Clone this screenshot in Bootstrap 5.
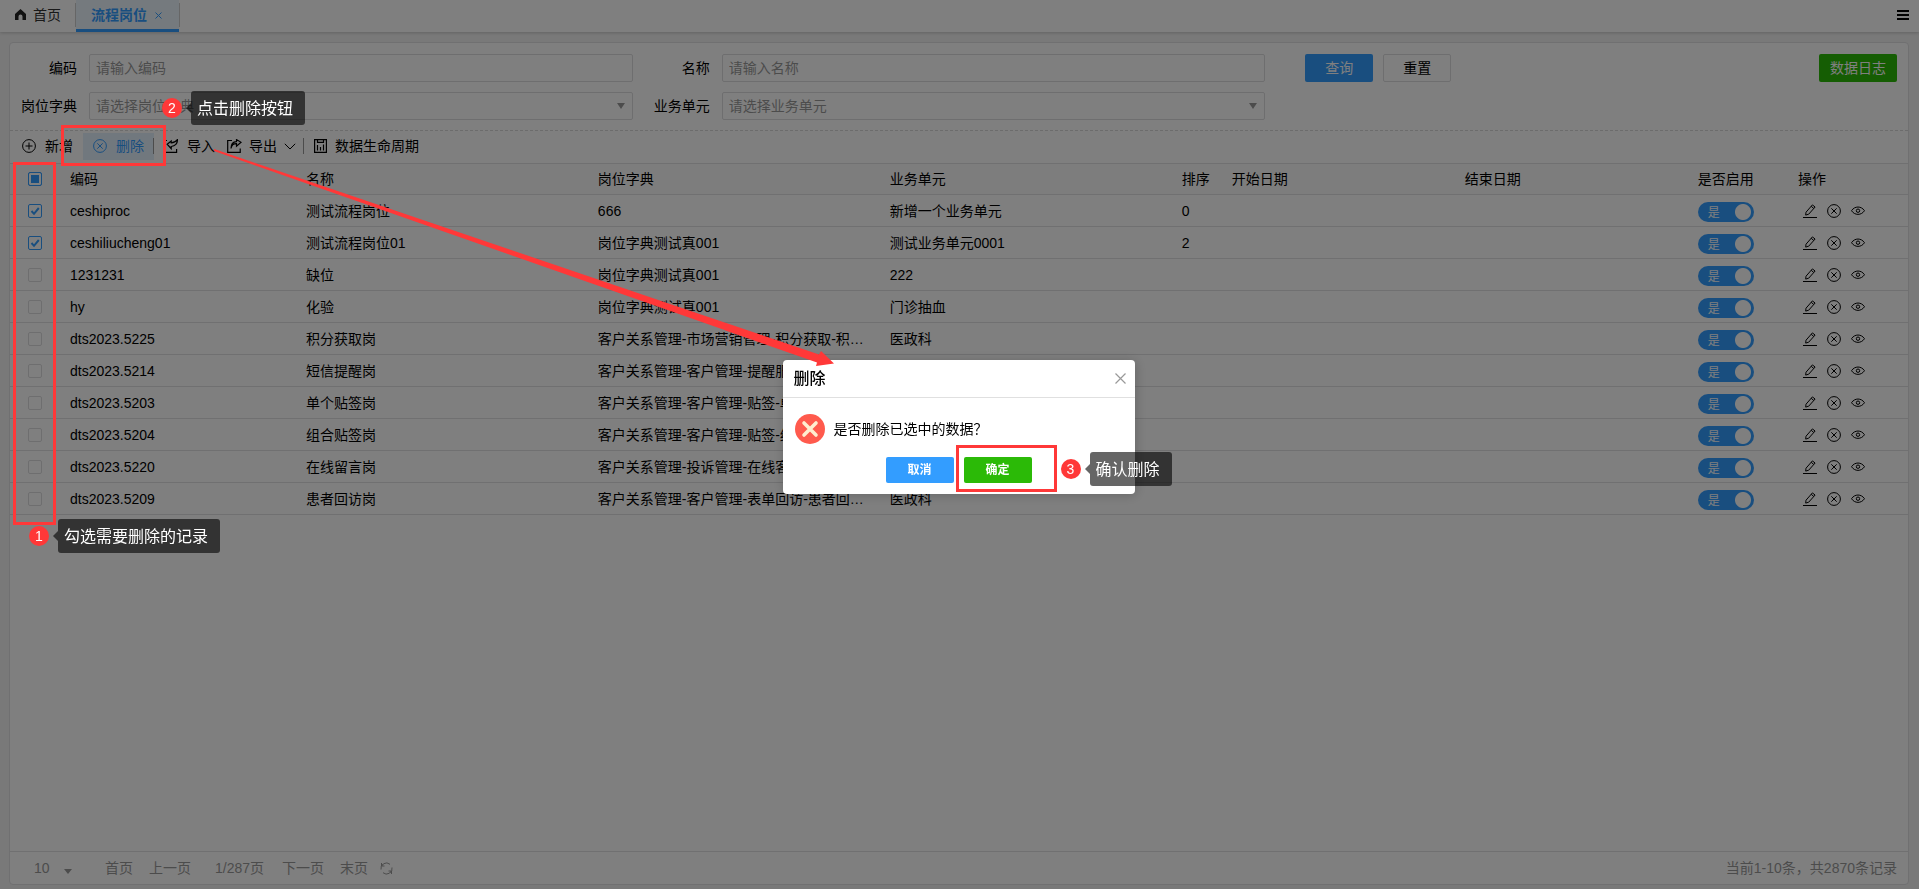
<!DOCTYPE html>
<html lang="zh-CN">
<head>
<meta charset="utf-8">
<meta name="viewport" content="width=device-width, initial-scale=1">
<title>流程岗位</title>
<link rel="stylesheet" href="https://cdn.jsdelivr.net/npm/bootstrap@5.3.0/dist/css/bootstrap.min.css">
<style>
:root { --blue: #339dff; --line: #e0e0e2; --red: #ff3838; --green: #2bba07; }
body { font: 14px/20px "Liberation Sans", "Noto Sans CJK SC", sans-serif; color: #000; background: #f2f2f2; }
button, input, select { font: inherit; color: inherit; }
svg { display: block; flex: none; }
.plain { border: 0; background: none; padding: 0; }
a { color: inherit; text-decoration: none; }

/* tab strip */
.tabstrip { height: 32px; background: #fff; box-shadow: 0 1px 3px rgba(0,0,0,.18); }
.tab-home { padding: 0 14px 3px 15px; color: #333; gap: 7px; }
.tab-now { width: 103px; padding: 1px 17px 0 15px; background: #eaf4fd; color: var(--blue); border-bottom: 3px solid var(--blue); font-weight: 700; }
.tab-rule { width: 1px; height: 24px; background: #ccc; margin-top: 3px; }
.tab-menu { padding: 0 10px 2px 10px; }

/* main panel */
.panel { margin: 10px 10px 4px 9px; background: #fff; border: 1px solid var(--line); border-radius: 4px; }
.filters { padding-top: 11px; border-bottom: 1px dashed #d8d8d8; }
.field { display: flex; align-items: center; margin-bottom: 10px; padding-right: 10px; }
.field label { width: 79px; padding-right: 12px; text-align: right; flex: none; }
.box { flex: 1; min-width: 0; height: 28px; padding: 0 6px; border: 1px solid #dcdcde; border-radius: 2px; background: #fff; color: #999; }
.box::placeholder { color: #999; opacity: 1; }
select.box, .page-size { appearance: none; background: #fff url("data:image/svg+xml,%3Csvg xmlns='http://www.w3.org/2000/svg' width='8' height='6'%3E%3Cpath d='M0 0h8L4 6z' fill='%23999'/%3E%3C/svg%3E") no-repeat right 7px center; }
.filter-actions { padding: 0 11px 0 30px; gap: 10px; }
.action { height: 28px; width: 68px; padding: 0; border: 1px solid transparent; border-radius: 2px; color: #fff; }
.bg-blue { background: var(--blue); } .bg-green { background: var(--green); }
.action.outline { color: #000; background: #fff; border-color: #dcdcde; }
.wide { width: 78px; }

/* toolbar */
.tools { height: 32px; padding: 0 0 2px 2px; }
.tool { display: flex; align-items: center; gap: 9px; height: 27px; padding: 0 10px; border: 0; background: none; }
.tool.on { background: #e2f0fd; color: var(--blue); }
.tool.menu-tool { gap: 7px; padding-right: 8px; }
.tool.last-tool { gap: 8px; }
.vr-line { width: 1px; height: 16px; background: #999; margin-left: -1px; }

/* data grid */
.grid { table-layout: fixed; width: 100%; margin: 0; border-top: 1px solid var(--line); }
.grid th, .grid td { height: 32px; padding: 0 10px; font-weight: 400; border-bottom: 1px solid var(--line); overflow: hidden; text-overflow: ellipsis; white-space: nowrap; vertical-align: middle; }
.grid th { height: 31px; background: #fbfbfb; }
.grid .pick { padding: 0 18px; }
.tick { appearance: none; display: block; width: 14px; height: 14px; margin: 0; border: 1px solid #dcdcde; border-radius: 2px; background: #fff; }
.tick:checked, .tick.some { border-color: var(--blue); }
.tick:checked { background: url("data:image/svg+xml,%3Csvg xmlns='http://www.w3.org/2000/svg' width='12' height='12'%3E%3Cpath d='M2.500 6l2.500 2.800L9.800 3' fill='none' stroke='%23339dff' stroke-width='2'/%3E%3C/svg%3E"); }
.tick.some { background: var(--blue); box-shadow: inset 0 0 0 2px #fff; }
.toggle { display: block; position: relative; width: 56px; height: 20px; margin-top: 2px; }
.toggle input { appearance: none; display: block; width: 56px; height: 20px; margin: 0; border-radius: 10px; background: radial-gradient(circle at 45px 10px, #fff 7.5px, var(--blue) 8.5px); }
.toggle span { position: absolute; left: 10px; top: 1px; font-size: 12px; line-height: 20px; color: #fff; }
.ops { gap: 10px; padding-left: 5px; }

/* pager */
.pager { height: 33px; padding: 0 11px 0 24px; color: #999; border-top: 1px solid var(--line); }
.page-size { width: 42px; height: 20px; border: 0; padding: 0; color: #999; background-position: right 4px bottom 4px; background-size: 8px 5px; margin-right: 29px; }
.page-now { margin: 0 18px 0 24px; }

/* dialog */
.shade { position: fixed; inset: 0; background: rgba(0,0,0,.5); z-index: 10; }
.dialog-layer { position: fixed; inset: 0; padding: 0 2px 35px 0; z-index: 20; }
.dialog-box { position: relative; width: 352px; background: #fff; border-radius: 4px; box-shadow: 1px 1px 12px rgba(0,0,0,.2); }
.dialog-head { height: 38px; padding: 0 9px 0 11px; border-bottom: 1px solid #e0e0e0; font-size: 16px; font-weight: 500; }
.dialog-text { padding: 16px 12px 13px; gap: 9px; }
.dialog-foot { gap: 10px; padding-bottom: 11px; }
.dialog-foot .action { height: 26px; font-size: 12px; font-weight: 700; }

/* guide marks drawn over the page */
.guide { z-index: 30; }
.frame, .step, .arrow { position: absolute; pointer-events: none; }
.frame { border: 3px solid var(--red); }
.step { display: flex; align-items: center; height: 34px; }
.step b { width: 20px; height: 20px; border-radius: 50%; background: var(--red); color: #fff; font-weight: 400; font-size: 14px; text-align: center; }
.step i { margin-left: 4px; border: 5px solid transparent; border-left: 0; border-right-color: rgba(0,0,0,.6); }
.step span { padding: 1px 12px 0 6px; font-size: 16px; line-height: 33px; color: #fff; background: rgba(0,0,0,.6); border-radius: 3px; white-space: nowrap; }
.frame-pick { left: 13px; top: 162px; width: 43px; height: 363px; }
.frame-del { left: 61px; top: 125px; width: 105px; height: 41px; }
.frame-ok { left: 173px; top: 85px; width: 101px; height: 47px; }
.step-1 { left: 29px; top: 519px; } .step-2 { left: 162px; top: 91px; } .step-3 { left: 278px; top: 92px; }
.arrow { left: 214px; top: 149px; }
</style>
</head>
<body class="d-flex flex-column min-vh-100">

<svg width="0" height="0" class="position-absolute" fill="none" stroke="currentColor">
  <symbol id="i-x" viewBox="0 0 14 14"><circle cx="7" cy="7" r="6.400"/><path d="M4.300 4.300l5.400 5.400M9.700 4.300L4.300 9.700"/></symbol>
  <symbol id="i-edit" viewBox="0 0 14 14"><path d="M0 13.500h14M3 8.200L9.400.900l2.700 2.100L5.700 10.200l-3 .900zM8.200 2.300l2.600 2.200"/></symbol>
  <symbol id="i-eye" viewBox="0 0 14 14"><path d="M.500 6.700C3.700 1.800 10.300 1.800 13.500 6.700 10.300 11.600 3.700 11.600.500 6.700z"/><circle cx="7" cy="6.700" r="1.700"/></symbol>
</svg>

<nav class="tabstrip d-flex">
  <a href="#" class="tab-home d-flex align-items-center"><svg width="11" height="11" viewBox="0 0 11 11" fill="#222"><path d="M5.500 0L11 5v6H7.500V7.500a2 2 0 0 0-4 0V11H0V5z"/></svg>首页</a>
  <span class="tab-rule"></span>
  <a href="#" class="tab-now d-flex align-items-center justify-content-between">流程岗位<svg width="7" height="7" viewBox="0 0 7 7" stroke="currentColor" fill="none"><path d="M.500.500l6 6M6.500.500l-6 6"/></svg></a>
  <span class="tab-rule"></span>
  <button class="plain tab-menu ms-auto" aria-label="菜单"><svg width="12" height="10" viewBox="0 0 12 10" fill="#000"><path d="M0 0h12v2H0zM0 4h12v2H0zM0 8h12v2H0z"/></svg></button>
</nav>

<main class="panel d-flex flex-column flex-fill">
  <form class="filters row g-0">
    <div class="col-4">
      <div class="field"><label for="code">编码</label><input class="box" id="code" placeholder="请输入编码"></div>
      <div class="field"><label for="dict">岗位字典</label><select class="box" id="dict"><option>请选择岗位字典</option></select></div>
    </div>
    <div class="col-4">
      <div class="field"><label for="name">名称</label><input class="box" id="name" placeholder="请输入名称"></div>
      <div class="field"><label for="unit">业务单元</label><select class="box" id="unit"><option>请选择业务单元</option></select></div>
    </div>
    <div class="col-4 d-flex align-items-start filter-actions">
      <button type="button" class="action bg-blue">查询</button>
      <button type="button" class="action outline">重置</button>
      <button type="button" class="action bg-green wide ms-auto">数据日志</button>
    </div>
  </form>

  <div class="tools d-flex align-items-center">
    <button class="tool"><svg width="14" height="14" viewBox="0 0 14 14" fill="none" stroke="currentColor"><circle cx="7" cy="7" r="6.400"/><path d="M3.500 7h7M7 3.500v7"/></svg>新增</button>
    <button class="tool on"><svg width="14" height="14" fill="none" stroke="currentColor"><use href="#i-x"/></svg>删除</button>
    <span class="vr-line"></span>
    <button class="tool pe-1"><svg width="14" height="14" viewBox="0 0 14 14" fill="none" stroke="currentColor" stroke-width="1.200"><path d="M3 1.500H.600v11.900h12V10M3.200 5.200l4-3.200v1.900c2.600 0 4.600-1 6.200-3.200.2 3.800-2.200 6.600-6.200 6.800v2.200z"/></svg>导入</button>
    <button class="tool ps-2 menu-tool"><svg width="15" height="14" viewBox="0 0 15 14" fill="none" stroke="currentColor" stroke-width="1.200"><path d="M5 1.500H.700v11.900h12.500V9.500M4 9.500C4.500 6 6.500 4.600 9.500 4.600v2.600l4.600-3.900L9.500.600v2C6 2.800 4 5.500 4 9.500z"/></svg>导出<svg width="12" height="7" viewBox="0 0 12 7" fill="none" stroke="currentColor"><path d="M.800.800L6 6l5.200-5.200"/></svg></button>
    <span class="vr-line"></span>
    <button class="tool last-tool"><svg width="13" height="14" viewBox="0 0 13 14" fill="none" stroke="currentColor" stroke-width="1.200"><path d="M.600.600h11.800v12.800H.600zM3.500 11.500V6M6.500 11.500V8M9.500 11.500V5.500M3.500.600v2.800h6V.600"/></svg>数据生命周期</button>
  </div>

  <table class="grid">
    <colgroup><col style="width:50px"><col style="width:12.43%"><col style="width:15.38%"><col style="width:15.38%"><col style="width:15.38%"><col style="width:50px"><col style="width:12.28%"><col style="width:12.28%"><col style="width:100px"><col style="width:120px"></colgroup>
    <thead><tr><th class="pick"><input type="checkbox" class="tick some" aria-label="全选"></th><th>编码</th><th>名称</th><th>岗位字典</th><th>业务单元</th><th>排序</th><th>开始日期</th><th>结束日期</th><th>是否启用</th><th>操作</th></tr></thead>
    <tbody id="rows"></tbody>
  </table>

  <footer class="pager d-flex align-items-center mt-auto">
    <select class="page-size" aria-label="每页条数"><option>10</option></select>
    <a href="#">首页</a><a href="#" class="ms-3">上一页</a>
    <span class="page-now">1/287页</span>
    <a href="#">下一页</a><a href="#" class="ms-3">末页</a>
    <button class="plain ms-2 ps-1" aria-label="刷新"><svg width="13" height="13" viewBox="0 0 13 13" fill="none" stroke="currentColor"><path d="M1 7.500A5.500 5.500 0 0 1 10 2.300M12 5.500A5.500 5.500 0 0 1 3 10.700M1.500 1v3h3M11.500 12V9h-3M1.500 4L3 2.300M11.500 9L10 10.700"/></svg></button>
    <span class="ms-auto">当前1-10条，共2870条记录</span>
  </footer>
</main>

<div class="shade"></div>

<div class="guide">
  <svg class="arrow guide" width="622" height="220" viewBox="0 0 622 220" fill="#ff3838"><path d="M0 0l605 205.500 2-3.500 13 12.500-18 2.500 1-3.500L0 2z"/></svg>
  <div class="frame guide frame-pick"></div>
  <div class="frame guide frame-del"></div>
  <div class="step guide step-1"><b>1</b><i></i><span>勾选需要删除的记录</span></div>
  <div class="step guide step-2"><b>2</b><i></i><span>点击删除按钮</span></div>
</div>

<div class="dialog-layer d-flex align-items-center justify-content-center">
  <section class="dialog-box" role="dialog" aria-labelledby="dlg-title">
    <div class="dialog-head d-flex align-items-center justify-content-between"><span id="dlg-title">删除</span>
      <button class="plain" aria-label="关闭"><svg width="11" height="11" viewBox="0 0 11 11" stroke="#999" stroke-width="1.200"><path d="M.500.500l10 10M10.500.500l-10 10"/></svg></button></div>
    <div class="dialog-text d-flex align-items-center"><svg width="30" height="30" viewBox="0 0 30 30"><circle cx="15" cy="15" r="15" fill="#ff5a4d"/><path d="M9 9l12 12M21 9L9 21" stroke="#ffedcf" stroke-width="3.600" stroke-linecap="round"/></svg>是否删除已选中的数据？</div>
    <div class="dialog-foot d-flex justify-content-center"><button class="action bg-blue">取消</button><button class="action bg-green">确定</button></div>
    <div class="frame frame-ok"></div>
    <div class="step step-3"><b>3</b><i></i><span>确认删除</span></div>
  </section>
</div>

<script>
const data = [
  ['ceshiproc', '测试流程岗位', '666', '新增一个业务单元', '0', true],
  ['ceshiliucheng01', '测试流程岗位01', '岗位字典测试真001', '测试业务单元0001', '2', true],
  ['1231231', '缺位', '岗位字典测试真001', '222', ''],
  ['hy', '化验', '岗位字典测试真001', '门诊抽血', ''],
  ['dts2023.5225', '积分获取岗', '客户关系管理-市场营销管理-积分获取-积分获取岗', '医政科', ''],
  ['dts2023.5214', '短信提醒岗', '客户关系管理-客户管理-提醒服务-短信提醒岗', '医政科', ''],
  ['dts2023.5203', '单个贴签岗', '客户关系管理-客户管理-贴签-单个贴签岗', '医政科', ''],
  ['dts2023.5204', '组合贴签岗', '客户关系管理-客户管理-贴签-组合贴签岗', '医政科', ''],
  ['dts2023.5220', '在线留言岗', '客户关系管理-投诉管理-在线客服-在线留言岗', '医政科', ''],
  ['dts2023.5209', '患者回访岗', '客户关系管理-客户管理-表单回访-患者回访岗', '医政科', '']
];
const op = (id, label) => `<button class="plain" aria-label="${label}"><svg width="14" height="14" fill="none" stroke="currentColor"><use href="#${id}"/></svg></button>`;
document.getElementById('rows').innerHTML = data.map(r => `<tr>
  <td class="pick"><input type="checkbox" class="tick" aria-label="选择 ${r[0]}" ${r[5] ? 'checked' : ''}></td>
  <td>${r[0]}</td><td>${r[1]}</td><td>${r[2]}</td><td>${r[3]}</td><td>${r[4]}</td><td></td><td></td>
  <td><label class="toggle"><input type="checkbox" role="switch" checked><span>是</span></label></td>
  <td><div class="ops d-flex">${op('i-edit', '编辑')}${op('i-x', '删除')}${op('i-eye', '查看')}</div></td></tr>`).join('');
</script>
<script src="https://cdn.jsdelivr.net/npm/bootstrap@5.3.0/dist/js/bootstrap.bundle.min.js"></script>
</body>
</html>
